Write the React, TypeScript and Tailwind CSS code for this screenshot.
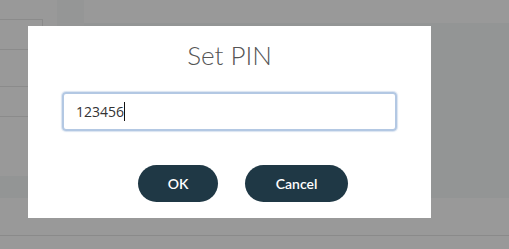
import React from 'react';

const rows = [30, 37, 30];

export default function App() {
  return (
    <div className="relative w-[509px] h-[249px] overflow-hidden bg-[#999999] flex flex-col">
      {/* page behind the overlay */}
      <div className="flex h-[198px]">
        <div className="w-[43px] pt-[19px] flex flex-col">
          <div className="h-[157px] border-t border-r border-[#8b8b8b] flex flex-col">
            {rows.map((h, i) => (
              <div key={i} className="border-b border-[#8b8b8b]" style={{ height: h }} />
            ))}
          </div>
          <div className="h-[22px] w-[28px] bg-[#939595]" />
        </div>
        <div className="w-[14px]" />
        <div className="w-[27px] bg-[#959696]" />
        <div className="flex-1 flex flex-col">
          <div className="h-[23px]" />
          <div className="flex-1 bg-[#939595]" />
        </div>
      </div>
      <div className="h-[38px] border-b border-[#8a8a8a]" />

      {/* modal */}
      <div className="absolute inset-0 pl-[28px] pt-[26px]">
        <div className="w-[403px] h-[192px] bg-white flex flex-col">
          <h2 className="pt-[13px] text-center text-[26px] leading-[32px] font-light text-[#555555] font-['Lato',sans-serif]">
            Set PIN
          </h2>
          <div className="mt-[21px] mx-[34px] h-[39px] rounded-[4px] border-2 border-[#b3c8e3] shadow-[0_0_1px_1px_rgba(179,200,227,0.5)] flex items-center pl-[12px]">
            <span className="text-[14px] text-[#333333] font-['Open_Sans',sans-serif]">123456</span>
            <span className="w-px h-[19px] bg-[#111111]" />
          </div>
          <div className="mt-[34px] flex gap-[27px] pl-[110px] font-['Lato',sans-serif]">
            <button className="w-[80px] h-[37px] rounded-full bg-[#1f3845] text-white text-[14px] font-semibold">
              OK
            </button>
            <button className="w-[103px] h-[37px] rounded-full bg-[#1f3845] text-white text-[14px] font-semibold">
              Cancel
            </button>
          </div>
        </div>
      </div>
    </div>
  );
}
